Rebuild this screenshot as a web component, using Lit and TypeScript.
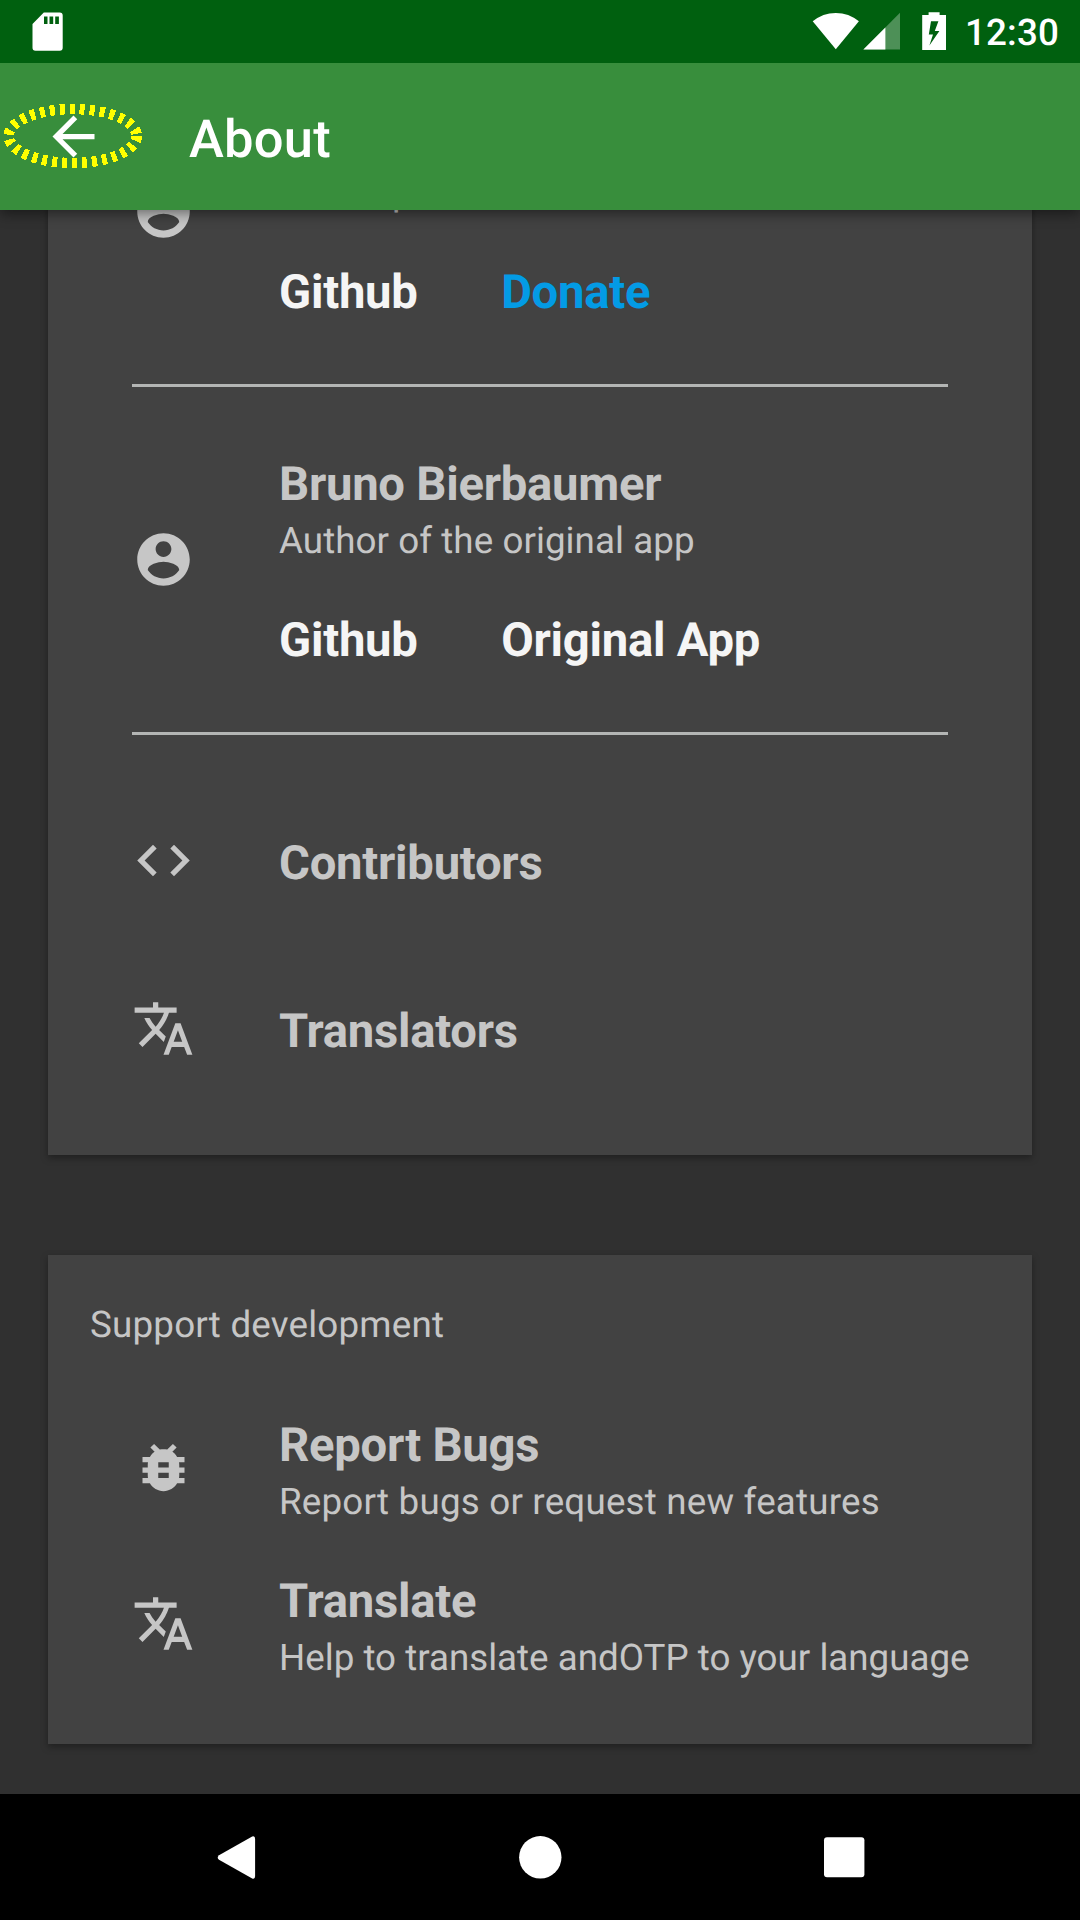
import { LitElement, html, css, svg, nothing } from "lit";
import { customElement, property } from "lit/decorators.js";
import { styleMap } from "lit/directives/style-map.js";

const ICONS: Record<string, string> = {
  back: "M20 11H7.83l5.59-5.59L12 4l-8 8 8 8 1.41-1.41L7.83 13H20v-2z",
  account:
    "M12 2C6.48 2 2 6.48 2 12s4.48 10 10 10 10-4.48 10-10S17.52 2 12 2zm0 3c1.66 0 3 1.34 3 3s-1.34 3-3 3-3-1.34-3-3 1.34-3 3-3zm0 14.2c-2.5 0-4.71-1.28-6-3.22.03-1.99 4-3.08 6-3.08 1.99 0 5.97 1.09 6 3.08-1.29 1.94-3.5 3.22-6 3.22z",
  code: "M9.4 16.6L4.8 12l4.6-4.6L8 6l-6 6 6 6 1.4-1.4zm5.2 0l4.6-4.6-4.6-4.6L16 6l6 6-6 6-1.4-1.4z",
  translate:
    "M12.87 15.07l-2.54-2.51.03-.03c1.74-1.94 2.98-4.17 3.71-6.53H17V4h-7V2H8v2H1v1.99h11.17C11.5 7.92 10.44 9.75 9 11.35 8.07 10.32 7.3 9.19 6.69 8h-2c.73 1.63 1.73 3.17 2.98 4.56l-5.09 5.02L4 19l5-5 3.11 3.11.76-2.04zM18.5 10h-2L12 22h2l1.12-3h4.75L21 22h2l-4.5-12zm-2.62 7l1.62-4.33L19.12 17h-3.24z",
  bug: "M20 8h-2.81c-.45-.78-1.07-1.45-1.82-1.96L17 4.41 15.59 3l-2.17 2.17C12.96 5.06 12.49 5 12 5c-.49 0-.96.06-1.41.17L8.41 3 7 4.41l1.62 1.63C7.88 6.55 7.26 7.22 6.81 8H4v2h2.09c-.05.33-.09.66-.09 1v1H4v2h2v1c0 .34.04.67.09 1H4v2h2.81c1.04 1.79 2.97 3 5.19 3s4.15-1.21 5.19-3H20v-2h-2.09c.05-.33.09-.66.09-1v-1h2v-2h-2v-1c0-.34-.04-.67-.09-1H20V8zm-6 8h-4v-2h4v2zm0-4h-4v-2h4v2z",
};

@customElement("md-icon")
class MdIcon extends LitElement {
  static styles = css`
    :host {
      display: block;
      width: 63px;
      height: 63px;
      flex: none;
    }
    .glyph {
      display: block;
      width: 63px;
      height: 63px;
      fill: currentColor;
    }
  `;
  @property() name = "";
  render() {
    return html`<svg class="glyph" viewBox="0 0 24 24">${svg`<path d=${ICONS[this.name]} />`}</svg>`;
  }
}

@customElement("status-bar")
class StatusBar extends LitElement {
  static styles = css`
    :host {
      display: flex;
      align-items: flex-start;
      position: relative;
      z-index: 2;
      flex: none;
      height: 63px;
      box-sizing: border-box;
      padding: 0 22px 0 32px;
      background: #00600f;
      color: #fff;
    }
    .icon {
      display: block;
      flex: none;
      fill: currentColor;
    }
    .spacer {
      flex: 1;
    }
    .signal {
      margin-left: 4px;
    }
    .battery {
      margin-left: 21px;
    }
    .clock {
      width: 93px;
      margin-left: 18px;
      font-size: 36.75px;
      font-weight: 500;
      line-height: 66px;
      letter-spacing: 0.15px;
      white-space: nowrap;
    }
  `;
  render() {
    return html`
      <svg class="icon" width="31" height="63" viewBox="0 0 31 63">
        <path
          fill-rule="evenodd"
          d="M11.8 12.6H27.7a3 3 0 0 1 3 3V47.7a3 3 0 0 1-3 3H3.5a3 3 0 0 1-3-3V24zM12 16.5v7.5h3.5v-7.5zM17.5 16.5v7.5h3.7v-7.5zM23.2 16.5v7.5h3.7v-7.5z"
        />
      </svg>
      <div class="spacer"></div>
      <svg class="icon" width="47" height="63" viewBox="0 0 47 63">
        <path d="M0.7 21.3Q10.7 12.9 23.8 12.9T46.9 21.3L23.8 49.2z" />
      </svg>
      <svg class="icon signal" width="38" height="63" viewBox="0 0 38 63">
        <path fill-opacity=".3" d="M0.4 49.5L37 12.7V49.5z" />
        <path d="M0.4 49.5L22.4 27.5V49.5z" />
      </svg>
      <svg class="icon battery" width="25" height="63" viewBox="0 0 25 63">
        <path
          fill-rule="evenodd"
          d="M6.6 12.3h11v2.8H24V50H.2V15.1h6.4zM9 21.2L6.8 34.4H11L7.4 45.6 17.4 30.9H12.8L16.4 21.2z"
        />
      </svg>
      <div class="clock">12:30</div>
    `;
  }
}

@customElement("about-row")
class AboutRow extends LitElement {
  static styles = css`
    :host {
      display: grid;
      grid-template-columns: 63px 1fr;
      column-gap: 84px;
      align-items: start;
      box-sizing: border-box;
      padding-left: 84px;
      color: #c6c6c6;
    }
    :host([kind="author"]) {
      height: 345px;
      padding-top: 69px;
    }
    :host([kind="author"]) .icon {
      margin-top: 72px;
    }
    :host([kind="single"]) {
      height: 168px;
      padding-top: 53px;
    }
    :host([kind="single"]) .texts {
      margin-top: 6px;
    }
    :host([kind="double"]) {
      height: 156px;
      padding-top: 27px;
    }
    :host([kind="double"]) .icon {
      margin-top: 19px;
    }
    .title,
    .links {
      font-size: 47.25px;
      font-weight: 700;
      line-height: 56px;
      white-space: nowrap;
      letter-spacing: -0.26px;
    }
    .subtitle {
      margin-top: 7px;
      font-size: 36.75px;
      line-height: 44px;
      white-space: nowrap;
    }
    .links {
      display: flex;
      gap: 83.5px;
      margin-top: 49px;
      color: #f5f5f5;
    }
    .accent {
      color: #039be5;
    }
  `;
  @property() icon = "";
  @property() heading = "";
  @property() subtitle = "";
  @property({ type: Number }) tracking = 0;
  @property({ attribute: false }) links: { label: string; accent?: boolean }[] = [];
  render() {
    return html`
      <md-icon class="icon" name=${this.icon}></md-icon>
      <div class="texts">
        <div class="title">${this.heading}</div>
        ${this.subtitle
          ? html`<div class="subtitle" style=${styleMap({ letterSpacing: `${this.tracking}px` })}>
              ${this.subtitle}
            </div>`
          : nothing}
        ${this.links.length
          ? html`<div class="links">
              ${this.links.map((l) => html`<span class=${l.accent ? "accent" : "link"}>${l.label}</span>`)}
            </div>`
          : nothing}
      </div>
    `;
  }
}

@customElement("app-root")
class AppRoot extends LitElement {
  static styles = css`
    :host {
      display: flex;
      flex-direction: column;
      width: 1080px;
      height: 1920px;
      overflow: hidden;
      background: #303030;
      font-family: Roboto, "Liberation Sans", sans-serif;
      text-rendering: geometricPrecision;
    }
    .toolbar {
      position: relative;
      z-index: 1;
      display: flex;
      align-items: center;
      flex: none;
      height: 147px;
      box-sizing: border-box;
      padding-left: 42px;
      gap: 84px;
      background: #388e3c;
      color: #fff;
      box-shadow: 0 4px 12px rgba(0, 0, 0, 0.45);
    }
    .ring {
      position: absolute;
      left: 0;
      top: 37px;
      width: 150px;
      height: 72px;
      fill: none;
      stroke: #ff0;
      stroke-width: 10.5;
      stroke-dasharray: 5 5;
      shape-rendering: crispEdges;
    }
    .page-title {
      padding-top: 4px;
      font-size: 52.5px;
      font-weight: 500;
      line-height: 62px;
      letter-spacing: 0.25px;
    }
    .content {
      display: flex;
      flex-direction: column;
      justify-content: flex-end;
      gap: 100px;
      flex: 1;
      min-height: 0;
      overflow: hidden;
      box-sizing: border-box;
      padding: 0 48px 50px;
    }
    .card {
      flex: none;
      background: #424242;
      box-shadow: 0 3px 7px rgba(0, 0, 0, 0.35);
    }
    .authors {
      padding-bottom: 43px;
    }
    .divider {
      height: 3px;
      margin: 0 84px;
      background: #b3b5b4;
    }
    .group {
      padding-top: 41px;
    }
    .support {
      padding: 48px 0 42px;
    }
    .section {
      padding: 0 42px 43px;
      font-size: 36.75px;
      line-height: 44px;
      letter-spacing: 0.2px;
      color: #c6c6c6;
    }
    .navbar {
      display: flex;
      align-items: center;
      justify-content: center;
      gap: 241px;
      flex: none;
      height: 126px;
      background: #000;
    }
    .key {
      display: block;
      width: 63px;
      height: 63px;
      fill: #fff;
    }
  `;
  render() {
    return html`
      <status-bar></status-bar>
      <header class="toolbar">
        <md-icon name="back"></md-icon>
        <svg class="ring" viewBox="0 0 150 72"><ellipse cx="72.7" cy="36" rx="64" ry="27" /></svg>
        <div class="page-title">About</div>
      </header>
      <main class="content">
        <section class="card authors">
          <about-row
            kind="author"
            icon="account"
            heading="Jakob Nixdorf"
            subtitle="Developer"
            tracking="0.45"
            .links=${[{ label: "Github" }, { label: "Donate", accent: true }]}
          ></about-row>
          <div class="divider"></div>
          <about-row
            kind="author"
            icon="account"
            heading="Bruno Bierbaumer"
            subtitle="Author of the original app"
            tracking="0.06"
            .links=${[{ label: "Github" }, { label: "Original App" }]}
          ></about-row>
          <div class="divider"></div>
          <div class="group">
            <about-row kind="single" icon="code" heading="Contributors"></about-row>
            <about-row kind="single" icon="translate" heading="Translators"></about-row>
          </div>
        </section>
        <section class="card support">
          <div class="section">Support development</div>
          <about-row
            kind="double"
            icon="bug"
            heading="Report Bugs"
            subtitle="Report bugs or request new features"
            tracking="0.2"
          ></about-row>
          <about-row
            kind="double"
            icon="translate"
            heading="Translate"
            subtitle="Help to translate andOTP to your language"
          ></about-row>
        </section>
      </main>
      <nav class="navbar">
        <svg class="key" viewBox="0 0 63 63">
          <path d="M14 29.2L47.2 10.5Q50.1 9.4 50.1 13V50Q50.1 53.6 47.2 52.5L14 33.8Q11.4 31.5 14 29.2z" />
        </svg>
        <svg class="key" viewBox="0 0 63 63"><circle cx="31.3" cy="31.3" r="21.2" /></svg>
        <svg class="key" viewBox="0 0 63 63"><rect x="11" y="11.3" width="40.4" height="40" rx="3" /></svg>
      </nav>
    `;
  }
}
